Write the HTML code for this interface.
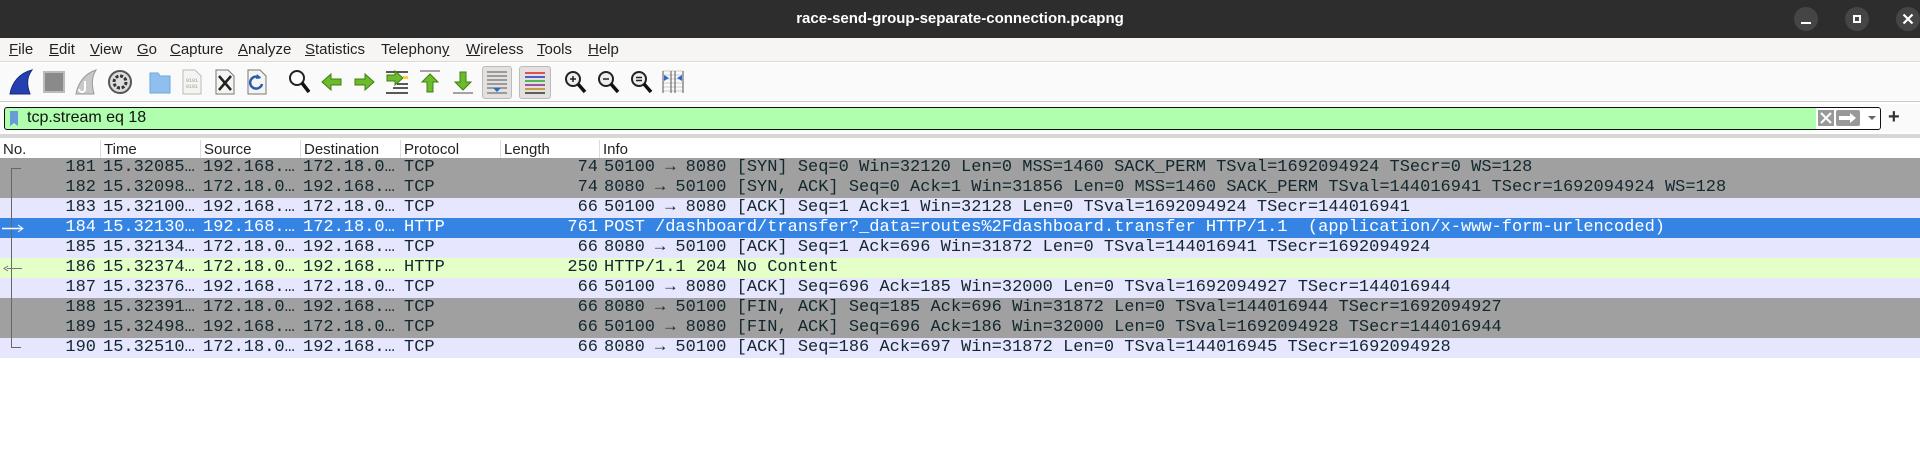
<!DOCTYPE html>
<html><head><meta charset="utf-8">
<style>
*{margin:0;padding:0;box-sizing:border-box}
body{width:1920px;height:450px;overflow:hidden;background:#fff;font-family:"Liberation Sans",sans-serif;position:relative}
.title{position:absolute;left:0;top:0;width:1920px;height:38px;background:#2d2d2d;color:#fff;font-size:15px;font-weight:bold;text-align:center;line-height:38px}
.wb{position:absolute;top:7px;width:24px;height:24px;border-radius:12px;background:#454545}
.menu{position:absolute;top:38px;left:0;width:1920px;height:24px;background:#f6f5f4;border-bottom:1px solid #dcdad7}
.menu span{position:absolute;top:3px;font-size:15px;color:#222}
.menu u{text-decoration:underline}
.tb{position:absolute;top:63px;left:0;width:1920px;height:39px;background:#fbfafa;border-bottom:1px solid #cfcdca}
.tb svg{position:absolute;top:5px}
.filt{position:absolute;top:104px;left:0;width:1920px;height:28px;background:#fbfafa}
.fbox{position:absolute;left:4px;top:3px;width:1877px;height:23px;border:1.5px solid #111;border-radius:3px;background:#afffaf;overflow:hidden}
.fbox .txt{position:absolute;left:22px;top:1px;font-size:16px;color:#111}
.fr{position:absolute;right:0;top:0;width:64px;height:21px;background:#fff}
.hdr{position:absolute;top:134px;left:0;width:1920px;height:24px;background:#fff;border-top:4px solid #d9d7d4}
.hdr span{position:absolute;top:2px;font-size:15px;color:#222;height:20px;border-left:1px solid #dedcda;padding-left:3px;line-height:19px}
.row{position:absolute;left:0;width:1920px;height:20px;font-family:"Liberation Mono",monospace;font-size:17px;line-height:20px;color:#12272e;white-space:pre}
.row span{position:absolute;top:0}
.g{background:#a0a0a0}.l{background:#e7e6ff}.s{background:#3584e4;color:#fff}.h{background:#e4ffc7}
.n{right:1824px;text-align:right}
.len{right:1322px;text-align:right}
</style></head><body>
<div class="title">race-send-group-separate-connection.pcapng</div>
<div class="wb" style="left:1794px"><div style="position:absolute;left:7px;top:15px;width:10px;height:2px;background:#fff"></div></div>
<div class="wb" style="left:1845px"><div style="position:absolute;left:8px;top:8px;width:8px;height:8px;border:2px solid #fff"></div></div>
<div class="wb" style="left:1896px"><svg width="24" height="24"><path d="M7.5 7.5L16.5 16.5M16.5 7.5L7.5 16.5" stroke="#fff" stroke-width="2.2"/></svg></div>

<div class="menu">
<span style="left:9px"><u>F</u>ile</span><span style="left:49px"><u>E</u>dit</span><span style="left:90px"><u>V</u>iew</span><span style="left:137px"><u>G</u>o</span><span style="left:170px"><u>C</u>apture</span><span style="left:238px"><u>A</u>nalyze</span><span style="left:305px"><u>S</u>tatistics</span><span style="left:381px">Telephon<u>y</u></span><span style="left:466px"><u>W</u>ireless</span><span style="left:537px"><u>T</u>ools</span><span style="left:588px"><u>H</u>elp</span>
</div>

<div class="tb">
<svg style="left:8px" width="26" height="28"><path d="M2 26 C4 14 12 5 24 2 C18 10 19 18 22 26 Z" fill="#2440b0" stroke="#142a80"/></svg>
<svg style="left:42px" width="24" height="28"><rect x="2" y="4" width="20" height="20" fill="#8a8a8a" stroke="#bbb" stroke-width="2"/></svg>
<svg style="left:74px" width="24" height="28"><path d="M2 26 C4 14 12 5 22 2 C17 10 18 18 20 26 Z" fill="#c8c8c8" stroke="#999"/><path d="M11 13 v8 a3 3 0 0 1 -6 0" stroke="#fff" stroke-width="2" fill="none"/></svg>
<svg style="left:107px" width="26" height="28"><circle cx="13" cy="14" r="11" fill="#ddd" stroke="#555" stroke-width="2"/><circle cx="13" cy="14" r="6" fill="none" stroke="#333" stroke-width="3" stroke-dasharray="3 1.7"/><circle cx="13" cy="14" r="2.5" fill="#ddd"/></svg>
<svg style="left:148px" width="24" height="28"><path d="M2 5 h8 l2 3 h10 v17 h-20 Z" fill="#8fbfee" stroke="#6fa4dc"/></svg>
<svg style="left:181px" width="22" height="28"><path d="M2 2 h12 l6 6 v18 h-18 Z" fill="#f4f4f0" stroke="#bbb"/><text x="5" y="14" font-size="5" fill="#999" font-family="Liberation Mono">0101</text><text x="5" y="20" font-size="5" fill="#999" font-family="Liberation Mono">0101</text></svg>
<svg style="left:214px" width="22" height="28"><path d="M2 2 h12 l6 6 v18 h-18 Z" fill="#f4f4f0" stroke="#777"/><path d="M5 8 L17 22 M17 8 L5 22" stroke="#222" stroke-width="2.5"/></svg>
<svg style="left:246px" width="22" height="28"><path d="M2 2 h12 l6 6 v18 h-18 Z" fill="#f4f4f0" stroke="#777"/><path d="M14 10 A6 6 0 1 0 16 16" stroke="#2a5ab0" stroke-width="2.5" fill="none"/><path d="M11 6 l4 4 -5 1z" fill="#2a5ab0"/></svg>
<svg style="left:287px" width="24" height="28"><circle cx="10" cy="10" r="7" fill="#fff" stroke="#222" stroke-width="2"/><path d="M15 15 L22 24" stroke="#111" stroke-width="3.5"/></svg>
<svg style="left:320px" width="24" height="28"><path d="M2 14 L11 6 v5 h10 v6 h-10 v5 Z" fill="#6cbb2c" stroke="#3d8010"/></svg>
<svg style="left:352px" width="24" height="28"><path d="M22 14 L13 6 v5 h-10 v6 h10 v5 Z" fill="#6cbb2c" stroke="#3d8010"/></svg>
<svg style="left:385px" width="24" height="28"><path d="M1 4h22M1 25h22M8 20h15M12 16h11" stroke="#222" stroke-width="1.5"/><path d="M18 10 L10 3 v4 h-8 v6 h8 v4 Z" fill="#6cbb2c" stroke="#3d8010"/><rect x="18" y="8" width="5" height="3" fill="#f3d23a"/></svg>
<svg style="left:418px" width="24" height="28"><path d="M2 3h20" stroke="#888" stroke-width="1.5"/><path d="M12 6 L4 14 h5 v10 h6 v-10 h5 Z" fill="#6cbb2c" stroke="#3d8010"/></svg>
<svg style="left:451px" width="24" height="28"><path d="M2 25h20" stroke="#888" stroke-width="1.5"/><path d="M12 22 L4 14 h5 v-10 h6 v10 h5 Z" fill="#6cbb2c" stroke="#3d8010"/></svg>
<div style="position:absolute;left:482px;top:3px;width:30px;height:33px;background:#e2e1df;border:1px solid #bbb;border-radius:3px"></div>
<svg style="left:484px" width="26" height="28"><path d="M3 4h20M3 8h20M3 12h20M3 16h20M3 20h20M3 25h20" stroke="#555" stroke-width="1"/><path d="M9 20h8l-4 4z" fill="#2a6ac8"/></svg>
<div style="position:absolute;left:519px;top:3px;width:32px;height:33px;background:#e2e1df;border:1px solid #bbb;border-radius:3px"></div>
<svg style="left:522px" width="26" height="28"><path d="M3 5h20" stroke="#d22" stroke-width="1.5"/><path d="M3 9h20" stroke="#23c" stroke-width="1.5"/><path d="M3 13h20" stroke="#2a2" stroke-width="1.5"/><path d="M3 17h20" stroke="#829" stroke-width="1.5"/><path d="M3 21h20" stroke="#b80" stroke-width="1.5"/><path d="M3 25h20" stroke="#333" stroke-width="1.5"/></svg>
<svg style="left:563px" width="24" height="28"><circle cx="10" cy="11" r="7" fill="#eee" stroke="#222" stroke-width="2"/><path d="M7 11h6M10 8v6" stroke="#222" stroke-width="1.5"/><path d="M15 16 L22 24" stroke="#111" stroke-width="3.5"/></svg>
<svg style="left:596px" width="24" height="28"><circle cx="10" cy="11" r="7" fill="#eee" stroke="#222" stroke-width="2"/><path d="M7 11h6" stroke="#222" stroke-width="1.5"/><path d="M15 16 L22 24" stroke="#111" stroke-width="3.5"/></svg>
<svg style="left:629px" width="24" height="28"><circle cx="10" cy="11" r="7" fill="#eee" stroke="#222" stroke-width="2"/><path d="M7 9.5h6M7 12.5h6" stroke="#222" stroke-width="1.5"/><path d="M15 16 L22 24" stroke="#111" stroke-width="3.5"/></svg>
<svg style="left:661px" width="24" height="28"><path d="M2 3h20M2 7h20M2 11h20M2 15h20M2 19h20M2 23h20" stroke="#ccc"/><path d="M2 3v22M22 3v22M10 3v22M14 3v22" stroke="#555"/><path d="M3 7l5 3-5 3zM21 7l-5 3 5 3z" fill="#2a6ac8"/></svg>
</div>

<div class="filt">
<div class="fbox">
<svg style="position:absolute;left:4px;top:2px" width="10" height="17"><path d="M1 1h8v15l-4-3-4 3z" fill="#6a9bd8"/></svg>
<span class="txt">tcp.stream eq 18</span>
<div class="fr">
<svg style="position:absolute;left:2px;top:2px" width="16" height="16"><rect width="16" height="16" fill="#999"/><path d="M3 3L13 13M13 3L3 13" stroke="#fff" stroke-width="2"/></svg>
<svg style="position:absolute;left:20px;top:2px" width="24" height="16"><rect width="24" height="16" rx="2" fill="#999"/><path d="M3 6h11v-3l6 5-6 5v-3h-11z" fill="#fff"/></svg>
<svg style="position:absolute;left:52px;top:8px" width="8" height="5"><path d="M0 0h8l-4 4z" fill="#666"/></svg>
</div>
</div>
<span style="position:absolute;left:1888px;top:2px;font-size:20px;font-weight:bold;color:#333">+</span>
</div>

<div class="hdr">
<span style="left:0;border-left:none">No.</span><span style="left:100px">Time</span><span style="left:200px">Source</span><span style="left:300px">Destination</span><span style="left:400px">Protocol</span><span style="left:500px">Length</span><span style="left:599px">Info</span>
</div>

<div class="row g" style="top:158px"><span class="n">181</span><span style="left:103px">15.32085…</span><span style="left:203px">192.168.…</span><span style="left:303px">172.18.0…</span><span style="left:404px">TCP</span><span class="len">74</span><span style="left:604px">50100 → 8080 [SYN] Seq=0 Win=32120 Len=0 MSS=1460 SACK_PERM TSval=1692094924 TSecr=0 WS=128</span></div>
<div class="row g" style="top:178px"><span class="n">182</span><span style="left:103px">15.32098…</span><span style="left:203px">172.18.0…</span><span style="left:303px">192.168.…</span><span style="left:404px">TCP</span><span class="len">74</span><span style="left:604px">8080 → 50100 [SYN, ACK] Seq=0 Ack=1 Win=31856 Len=0 MSS=1460 SACK_PERM TSval=144016941 TSecr=1692094924 WS=128</span></div>
<div class="row l" style="top:198px"><span class="n">183</span><span style="left:103px">15.32100…</span><span style="left:203px">192.168.…</span><span style="left:303px">172.18.0…</span><span style="left:404px">TCP</span><span class="len">66</span><span style="left:604px">50100 → 8080 [ACK] Seq=1 Ack=1 Win=32128 Len=0 TSval=1692094924 TSecr=144016941</span></div>
<div class="row s" style="top:218px"><span class="n">184</span><span style="left:103px">15.32130…</span><span style="left:203px">192.168.…</span><span style="left:303px">172.18.0…</span><span style="left:404px">HTTP</span><span class="len">761</span><span style="left:604px">POST /dashboard/transfer?_data=routes%2Fdashboard.transfer HTTP/1.1  (application/x-www-form-urlencoded)</span></div>
<div class="row l" style="top:238px"><span class="n">185</span><span style="left:103px">15.32134…</span><span style="left:203px">172.18.0…</span><span style="left:303px">192.168.…</span><span style="left:404px">TCP</span><span class="len">66</span><span style="left:604px">8080 → 50100 [ACK] Seq=1 Ack=696 Win=31872 Len=0 TSval=144016941 TSecr=1692094924</span></div>
<div class="row h" style="top:258px"><span class="n">186</span><span style="left:103px">15.32374…</span><span style="left:203px">172.18.0…</span><span style="left:303px">192.168.…</span><span style="left:404px">HTTP</span><span class="len">250</span><span style="left:604px">HTTP/1.1 204 No Content</span></div>
<div class="row l" style="top:278px"><span class="n">187</span><span style="left:103px">15.32376…</span><span style="left:203px">192.168.…</span><span style="left:303px">172.18.0…</span><span style="left:404px">TCP</span><span class="len">66</span><span style="left:604px">50100 → 8080 [ACK] Seq=696 Ack=185 Win=32000 Len=0 TSval=1692094927 TSecr=144016944</span></div>
<div class="row g" style="top:298px"><span class="n">188</span><span style="left:103px">15.32391…</span><span style="left:203px">172.18.0…</span><span style="left:303px">192.168.…</span><span style="left:404px">TCP</span><span class="len">66</span><span style="left:604px">8080 → 50100 [FIN, ACK] Seq=185 Ack=696 Win=31872 Len=0 TSval=144016944 TSecr=1692094927</span></div>
<div class="row g" style="top:318px"><span class="n">189</span><span style="left:103px">15.32498…</span><span style="left:203px">192.168.…</span><span style="left:303px">172.18.0…</span><span style="left:404px">TCP</span><span class="len">66</span><span style="left:604px">50100 → 8080 [FIN, ACK] Seq=696 Ack=186 Win=32000 Len=0 TSval=1692094928 TSecr=144016944</span></div>
<div class="row l" style="top:338px"><span class="n">190</span><span style="left:103px">15.32510…</span><span style="left:203px">172.18.0…</span><span style="left:303px">192.168.…</span><span style="left:404px">TCP</span><span class="len">66</span><span style="left:604px">8080 → 50100 [ACK] Seq=186 Ack=697 Win=31872 Len=0 TSval=144016945 TSecr=1692094928</span></div>

<svg style="position:absolute;left:0;top:158px" width="30" height="200">
<path d="M21 10.5H11.5V189.5H21" stroke="#666" fill="none"/>
<path d="M2 70.5H22" stroke="#fff" stroke-width="1.5"/><path d="M18 67l5 3.5-5 3.5" stroke="#fff" fill="none"/>
<path d="M7 110.5H22" stroke="#777"/><path d="M8 108l-4 2.5 4 2.5" stroke="#777" fill="none"/>
</svg>
</body></html>
